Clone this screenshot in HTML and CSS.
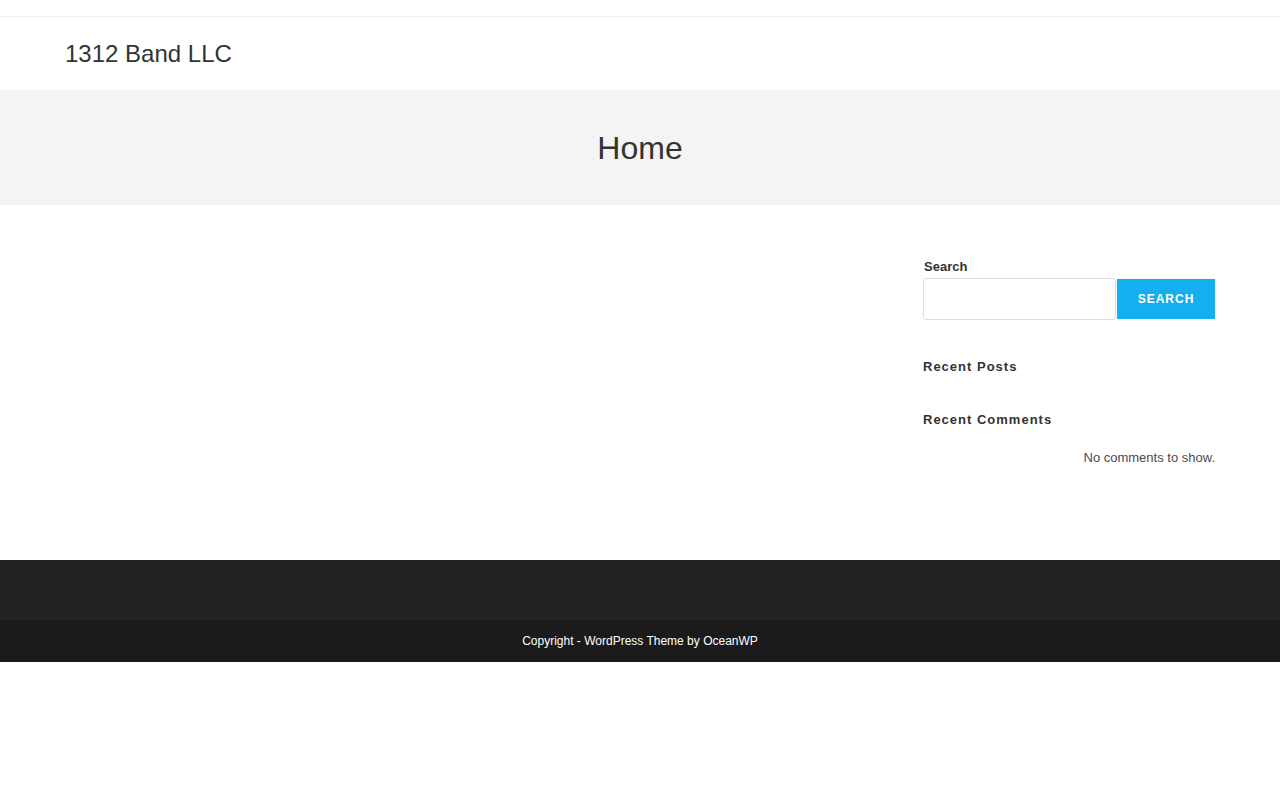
FILE: index.html
```html
<!DOCTYPE html>
<html>
<head>
<meta charset="utf-8">
<link rel="stylesheet" href="styles.css">
</head>
<body>
<div class="topline"></div>
<header class="site-header">
  <div class="container">
    <a class="site-title">1312 Band LLC</a>
  </div>
</header>
<section class="page-header">
  <h1 class="page-title">Home</h1>
</section>
<main class="main container">
  <div class="content"></div>
  <aside class="sidebar">
    <div class="widget">
      <label class="search-label">Search</label>
      <div class="search-row">
        <input class="search-input" type="text">
        <button class="search-btn">SEARCH</button>
      </div>
    </div>
    <div class="widget">
      <h2 class="widget-title">Recent Posts</h2>
    </div>
    <div class="widget">
      <h2 class="widget-title">Recent Comments</h2>
      <p class="no-comments">No comments to show.</p>
    </div>
  </aside>
</main>
<footer>
  <div class="footer-widgets"></div>
  <div class="footer-bottom">Copyright - WordPress Theme by OceanWP</div>
</footer>
</body>
</html>
```
FILE: styles.css
```css
* { box-sizing: border-box; }
body {
  margin: 0;
  font-family: "Liberation Sans", Arial, sans-serif;
  color: #333;
  background: #fff;
}
.topline {
  height: 17px;
  border-bottom: 1px solid #eeeeee;
}
.container {
  width: 1150px;
  margin: 0 auto;
}
.site-header {
  height: 74px;
  border-bottom: 1px solid #f1f1f1;
  display: flex;
  align-items: center;
}
.site-title {
  font-size: 24px;
  color: #333;
  display: block;
  line-height: 1;
  padding-top: 1px;
}
.page-header {
  background: #f4f4f4;
  height: 114px;
  display: flex;
  align-items: center;
  justify-content: center;
}
.page-title {
  margin: 0;
  font-weight: 400;
  font-size: 32px;
  line-height: 1.4;
  color: #333;
  padding-top: 1px;
  padding-bottom: 1px;
}
.main {
  display: flex;
  justify-content: space-between;
  padding-top: 50px;
  height: 355px;
}
.sidebar {
  width: 292px;
}
.widget { margin-bottom: 0; }
.search-label {
  display: block;
  font-size: 13px;
  font-weight: 700;
  color: #333;
  margin: 4px 0 3px 1px;
  line-height: 16px;
}
.search-row {
  display: flex;
  align-items: center;
}
.search-input {
  width: 193px;
  height: 42px;
  border: 1px solid #ddd;
  border-radius: 3px;
  background: #fff;
  margin: 0;
}
.search-btn {
  width: 98px;
  height: 40px;
  margin-left: 1px;
  background: #13aff0;
  color: #fff;
  border: 0;
  font-family: "Liberation Sans", Arial, sans-serif;
  font-size: 12px;
  font-weight: 700;
  letter-spacing: 1px;
}
.widget-title {
  font-size: 13px;
  font-weight: 700;
  letter-spacing: 1px;
  color: #333;
  margin: 0;
  line-height: 16px;
}
.widget:nth-child(2) .widget-title { margin-top: 39px; }
.widget:nth-child(3) .widget-title { margin-top: 37px; }
.no-comments {
  text-align: right;
  font-size: 13px;
  color: #4a4a55;
  margin: 22px 0 0;
  line-height: 16px;
}
.footer-widgets {
  background: #222;
  height: 60px;
}
.footer-bottom {
  background: #1b1b1b;
  height: 42px;
  color: #fff;
  font-size: 12px;
  text-align: center;
  line-height: 42px;
}
```
